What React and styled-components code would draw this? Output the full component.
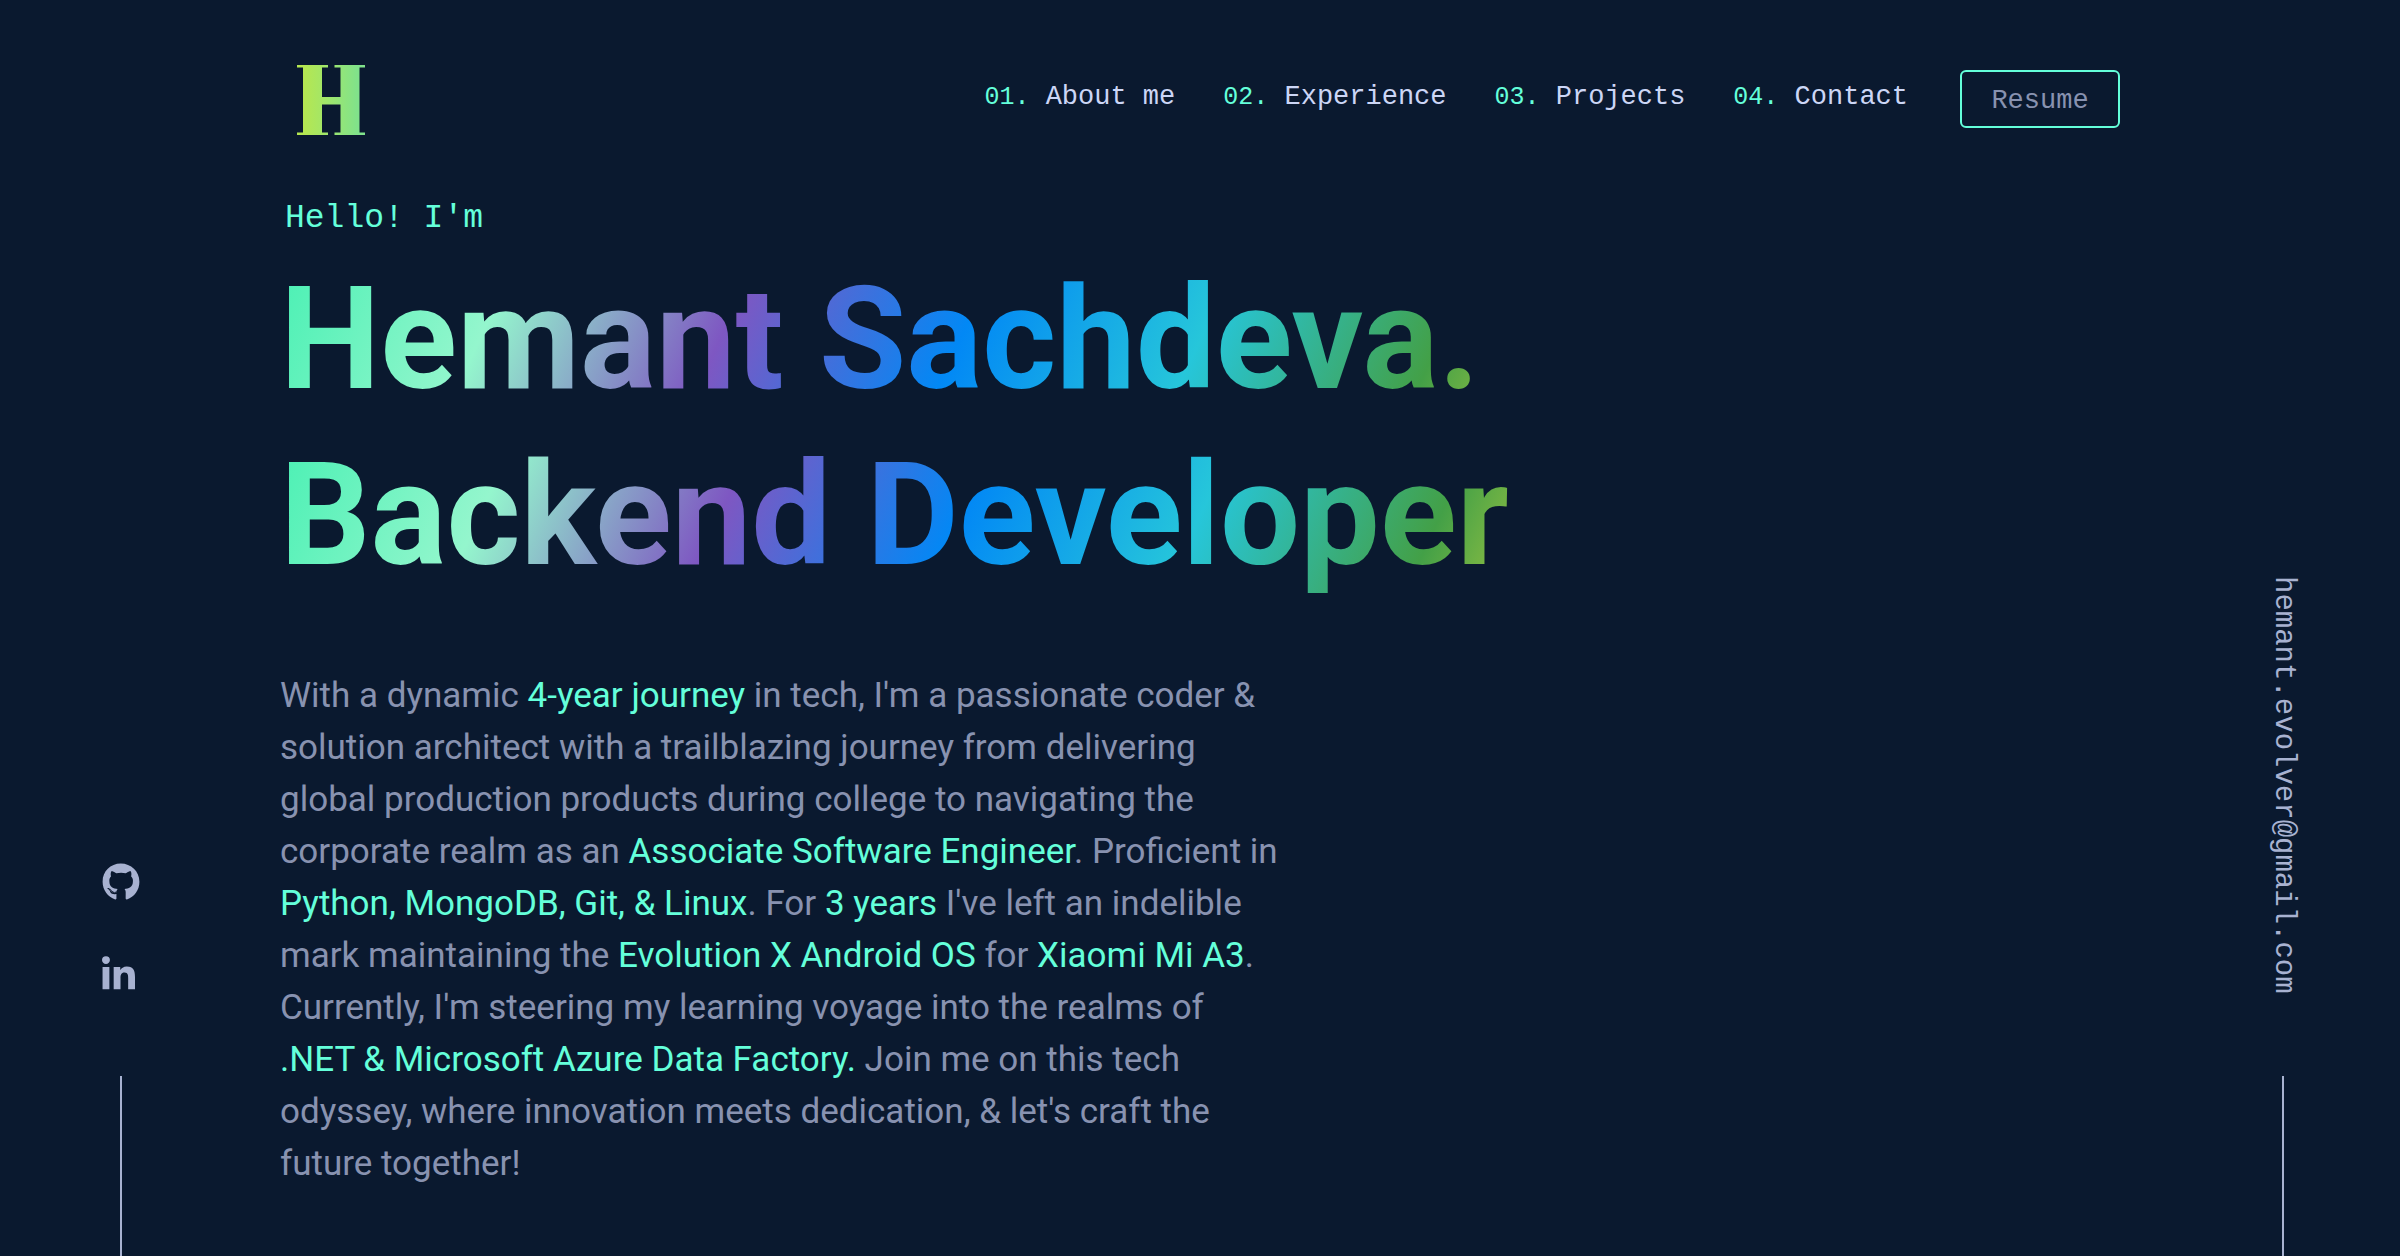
import React from 'react';
import styled, { createGlobalStyle } from 'styled-components';
import { FaGithub, FaLinkedinIn } from 'react-icons/fa';

const color = {
  navy: '#0a192f',
  green: '#64ffda',
  slate: '#8892b0',
  lightSlate: '#a8b2d1',
  lightest: '#ccd6f6',
};
const sans = 'Roboto, "Liberation Sans", sans-serif';
const mono = '"Liberation Mono", monospace';

const GlobalStyle = createGlobalStyle`
  * { box-sizing: border-box; }
  body { margin: 0; background: ${color.navy}; color: ${color.slate}; font-family: ${sans}; }
  a { color: inherit; text-decoration: none; }
`;

const Page = styled.div`
  display: grid;
  grid-template-columns: 280px minmax(0, 1fr) 280px;
  min-height: 100vh;
`;

const Rail = styled.aside`
  display: flex;
  flex-direction: column;
  justify-content: flex-end;
  align-items: ${(p) => (p.$side === 'left' ? 'flex-start' : 'flex-end')};
  padding: ${(p) => (p.$side === 'left' ? '0 0 0 102px' : '0 98px 0 0')};
`;

const RailColumn = styled.div`
  display: flex;
  flex-direction: column;
  align-items: center;
  width: 38px;

  &::after {
    content: '';
    width: 2px;
    height: 180px;
    background: ${color.lightSlate};
  }
`;

const SocialList = styled.ul`
  display: flex;
  flex-direction: column;
  align-items: flex-start;
  gap: 55px;
  width: 100%;
  margin: 0 0 82px;
  padding: 0;
  list-style: none;
`;

const SocialLink = styled.a`
  display: flex;
  color: ${color.lightSlate};

  svg { width: ${(p) => p.$width}px; height: 38px; }
`;

const EmailLink = styled.a`
  margin-bottom: 82px;
  font: 29px/38px ${mono};
  color: ${color.lightSlate};
  writing-mode: vertical-rl;
`;

const Content = styled.div`
  display: flex;
  flex-direction: column;
  gap: 64px;
  padding-top: 65px;
`;

const Header = styled.header`
  display: flex;
  justify-content: space-between;
  align-items: flex-start;
`;

const LogoLink = styled.a`
  display: flex;
  padding-left: 17px;
`;

const Nav = styled.nav`
  display: flex;
  align-items: flex-start;
  gap: 52px;
  padding-top: 5px;
`;

const NavList = styled.ol`
  display: flex;
  gap: 48px;
  margin: 0;
  padding: 10px 0 0;
  list-style: none;
`;

const NavLink = styled.a`
  font: 27px/34px ${mono};
  color: ${color.lightest};
  white-space: pre;
`;

const NavNumber = styled.span`
  font-size: 25px;
  color: ${color.green};
`;

const ResumeButton = styled.button`
  width: 160px;
  height: 58px;
  padding: 4px 0 0;
  border: 2px solid ${color.green};
  border-radius: 6px;
  background: transparent;
  font: 27px/34px ${mono};
  color: ${color.slate};
`;

const Greeting = styled.p`
  margin: 0 0 13px;
  padding-left: 5px;
  font: 33px/40px ${mono};
  color: ${color.green};
`;

const Headline = styled.h1`
  margin: 0 0 66px;
  font: 700 142px/176px ${sans};
`;

const HeadlineRow = styled.span`
  display: block;
  background: linear-gradient(
    115deg,
    #48f0b3, #94f6cd, #7e57c2, #0288f5, #26c6da, #43a047, #ffeb3b, #ffa000, #f4511e
  );
  background-clip: text;
  -webkit-background-clip: text;
  color: transparent;
`;

const Bio = styled.p`
  max-width: 1000px;
  margin: 0;
  font-size: 35px;
  line-height: 52px;
`;

const Mark = styled.span`
  color: ${color.green};
`;

const links = [
  ['01.', 'About me', '#about'],
  ['02.', 'Experience', '#experience'],
  ['03.', 'Projects', '#projects'],
  ['04.', 'Contact', '#contact'],
];

function Logo() {
  return (
    <svg width="68" height="70" viewBox="0 0 68 70" aria-hidden="true">
      <defs>
        <linearGradient id="lime" x1="0" y1="0" x2="68" y2="0" gradientUnits="userSpaceOnUse">
          <stop offset="0.1" stopColor="#b5e751" />
          <stop offset="0.5" stopColor="#9de66f" />
          <stop offset="0.9" stopColor="#80e28b" />
        </linearGradient>
      </defs>
      <g fill="url(#lime)">
        <rect x="0" y="0" width="31" height="2.5" />
        <rect x="37.5" y="0" width="30.5" height="2.5" />
        <rect x="6" y="1" width="19" height="68" />
        <rect x="43.5" y="1" width="19" height="68" />
        <rect x="24" y="32" width="20" height="7.5" />
        <rect x="0" y="67.5" width="31" height="2.5" />
        <rect x="37.5" y="67.5" width="30.5" height="2.5" />
      </g>
    </svg>
  );
}

export default function App() {
  return (
    <>
      <GlobalStyle />
      <Page>
        <Rail $side="left">
          <RailColumn>
            <SocialList>
              <li>
                <SocialLink href="#github" aria-label="GitHub" $width={38}><FaGithub /></SocialLink>
              </li>
              <li>
                <SocialLink href="#linkedin" aria-label="LinkedIn" $width={33}><FaLinkedinIn /></SocialLink>
              </li>
            </SocialList>
          </RailColumn>
        </Rail>

        <Content>
          <Header>
            <LogoLink href="#home" aria-label="Home"><Logo /></LogoLink>
            <Nav>
              <NavList>
                {links.map(([number, label, href]) => (
                  <li key={href}>
                    <NavLink href={href}><NavNumber>{number}</NavNumber> {label}</NavLink>
                  </li>
                ))}
              </NavList>
              <ResumeButton type="button">Resume</ResumeButton>
            </Nav>
          </Header>

          <main>
            <Greeting>Hello! I'm</Greeting>
            <Headline>
              <HeadlineRow>Hemant Sachdeva.</HeadlineRow>
              <HeadlineRow>Backend Developer</HeadlineRow>
            </Headline>
            <Bio>
              With a dynamic <Mark>4-year journey</Mark> in tech, I'm a passionate coder &amp; solution
              architect with a trailblazing journey from delivering global production products during
              college to navigating the corporate realm as an <Mark>Associate Software Engineer</Mark>.
              Proficient in <Mark>Python, MongoDB, Git, &amp; Linux</Mark>. For <Mark>3 years</Mark> I've
              left an indelible mark maintaining the <Mark>Evolution X Android OS</Mark> for{' '}
              <Mark>Xiaomi Mi A3</Mark>. Currently, I'm steering my learning voyage into the realms of{' '}
              <Mark>.NET &amp; Microsoft Azure Data Factory.</Mark> Join me on this tech odyssey, where
              innovation meets dedication, &amp; let's craft the future together!
            </Bio>
          </main>
        </Content>

        <Rail $side="right">
          <RailColumn>
            <EmailLink href="mailto:hemant.evolver@gmail.com">hemant.evolver@gmail.com</EmailLink>
          </RailColumn>
        </Rail>
      </Page>
    </>
  );
}
